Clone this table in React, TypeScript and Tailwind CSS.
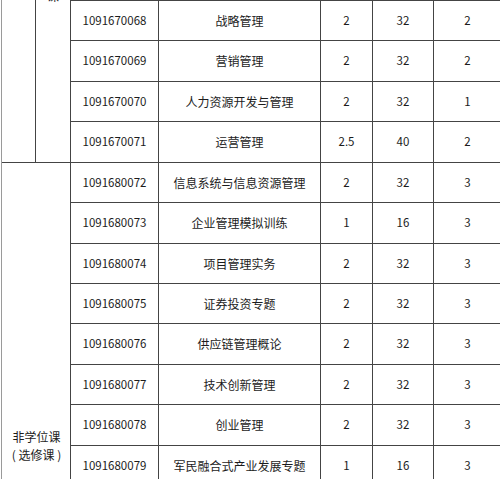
type Row = { code: string; name: string; credit: string; hours: string; term: string };

const UPPER: Row[] = [
	{ code: "1091670068", name: "战略管理", credit: "2", hours: "32", term: "2" },
	{ code: "1091670069", name: "营销管理", credit: "2", hours: "32", term: "2" },
	{ code: "1091670070", name: "人力资源开发与管理", credit: "2", hours: "32", term: "1" },
	{ code: "1091670071", name: "运营管理", credit: "2.5", hours: "40", term: "2" },
];

const LOWER: Row[] = [
	{ code: "1091680072", name: "信息系统与信息资源管理", credit: "2", hours: "32", term: "3" },
	{ code: "1091680073", name: "企业管理模拟训练", credit: "1", hours: "16", term: "3" },
	{ code: "1091680074", name: "项目管理实务", credit: "2", hours: "32", term: "3" },
	{ code: "1091680075", name: "证券投资专题", credit: "2", hours: "32", term: "3" },
	{ code: "1091680076", name: "供应链管理概论", credit: "2", hours: "32", term: "3" },
	{ code: "1091680077", name: "技术创新管理", credit: "2", hours: "32", term: "3" },
	{ code: "1091680078", name: "创业管理", credit: "2", hours: "32", term: "3" },
	{ code: "1091680079", name: "军民融合式产业发展专题", credit: "1", hours: "16", term: "3" },
];

// grid line 1 is a zero-height strip, so the gap under it draws the top border
const ROW_START = [
	"row-start-2", "row-start-3", "row-start-4", "row-start-5", "row-start-6", "row-start-7",
	"row-start-8", "row-start-9", "row-start-10", "row-start-11", "row-start-12", "row-start-13",
];
const COL_START = ["col-start-3", "col-start-4", "col-start-5", "col-start-6", "col-start-7"];

function Cells({ row, idx }: { row: Row; idx: number }) {
	const values = [row.code, row.name, row.credit, row.hours, row.term];
	return (
		<>
			{values.map((v, i) => (
				<div
					key={i}
					className={`bg-white flex items-center justify-center text-[#1c1c1c] ${
						i === 1 ? "text-[12px]" : "text-[11.5px]"
					} ${ROW_START[idx]} ${COL_START[i]}`}
				>
					{v}
				</div>
			))}
		</>
	);
}

export default function App() {
	return (
		<div className="w-[500px] h-[479px] overflow-hidden bg-white pl-px font-['Noto_Sans_CJK_SC','Noto_Sans',sans-serif]">
			<div className="grid gap-px bg-[#444] border-l border-[#9a9a9a] w-[500px] grid-cols-[33px_34px_87px_161px_51px_60px_67px] grid-rows-[0px_39px_40px_39px_40px_39px_40px_39px_39px_40px_39px_40px_39px]">
				{/* upper group: two narrow merged cells continuing from above */}
				<div className="bg-white col-start-1 row-start-1 row-span-5" />
				<div className="bg-white relative overflow-hidden col-start-2 row-start-1 row-span-5">
					<span className="absolute left-0 right-0 top-[-13px] text-center text-[12px] text-[#1c1c1c]">
						课
					</span>
				</div>
				{UPPER.map((r, i) => (
					<Cells key={r.code} row={r} idx={i} />
				))}

				{/* lower group: 非学位课 */}
				<div className="bg-white col-start-1 col-span-2 row-start-6 row-span-8 flex flex-col items-center justify-end pb-[21px] pl-px text-[12px] leading-[18px] text-[#1c1c1c]">
					<span>非学位课</span>
					<span className="whitespace-pre">( 选修课 )</span>
				</div>
				{LOWER.map((r, i) => (
					<Cells key={r.code} row={r} idx={i + 4} />
				))}
			</div>
		</div>
	);
}
